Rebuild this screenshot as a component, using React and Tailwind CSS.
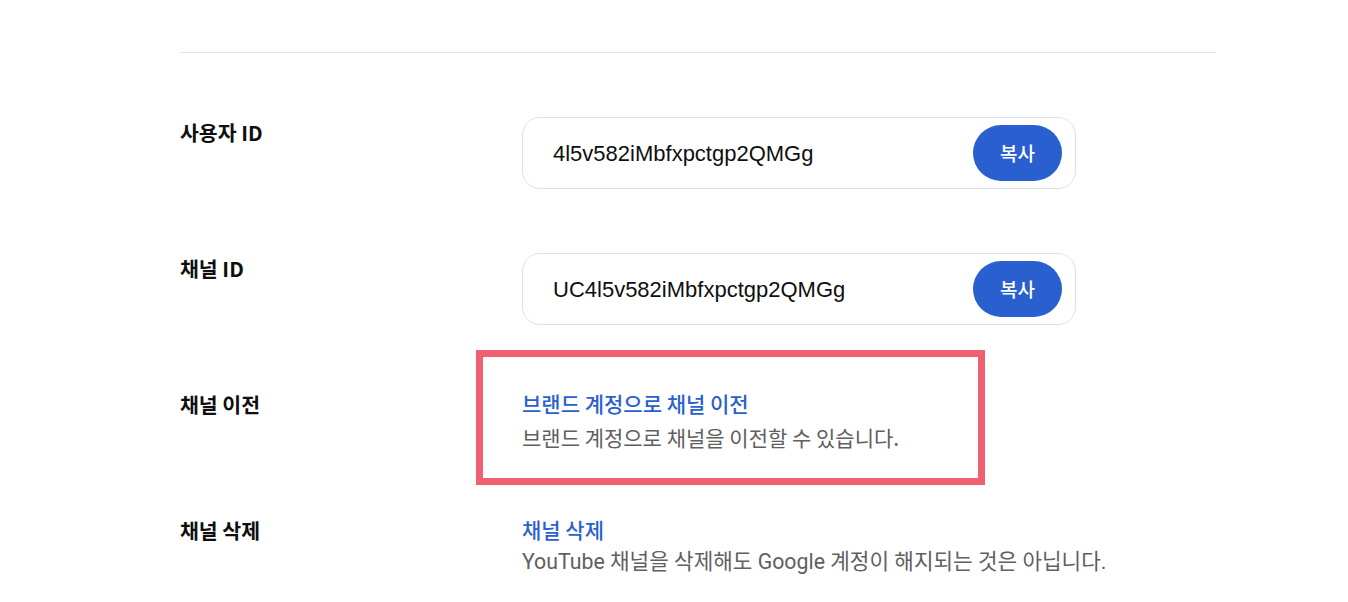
import React from 'react';

const kr = { fontFamily: '"Noto Sans CJK KR", "Noto Sans", sans-serif' };
const mono = { fontFamily: '"Liberation Sans", Arial, sans-serif' };
const mixed = { fontFamily: 'Roboto, "Noto Sans CJK KR", sans-serif' };

function Label({ children }) {
  return (
    <div className="w-[342px] shrink-0 pt-[1px] text-[20.5px] leading-[28px] font-bold text-[#0f0f0f]" style={kr}>
      {children}
    </div>
  );
}

function CopyField({ value }) {
  return (
    <div className="flex h-[72px] w-[554px] items-center justify-between rounded-[18px] border border-[#e0e0e0] bg-white pl-[30px] pr-[13px]">
      <span className="text-[22px] text-[#0f0f0f]" style={mono}>{value}</span>
      <button className="h-[56px] w-[89px] rounded-full bg-[#2a5fd0] text-[19px] font-medium text-white" style={kr}>
        복사
      </button>
    </div>
  );
}

function LinkBlock({ title, desc, descStyle }) {
  return (
    <div className="flex flex-col">
      <a className="text-[21px] leading-[28px] font-medium text-[#2a5fd0]" style={kr}>{title}</a>
      <p className="mt-[6px] text-[21px] leading-[28px] text-[#606060]" style={descStyle}>{desc}</p>
    </div>
  );
}

export default function App() {
  return (
    <div className="min-h-[602px] w-full bg-white">
      <div className="ml-[180px] w-[1036px] pt-[52px]">
        <div className="h-px w-full bg-[#e5e5e5]" />
        <div className="mt-[64px] flex flex-col gap-16">
          <div className="flex">
            <Label>사용자 ID</Label>
            <CopyField value="4l5v582iMbfxpctgp2QMGg" />
          </div>
          <div className="flex">
            <Label>채널 ID</Label>
            <CopyField value="UC4l5v582iMbfxpctgp2QMGg" />
          </div>
          <div className="flex">
            <Label>채널 이전</Label>
            <div className="relative">
              <LinkBlock
                title="브랜드 계정으로 채널 이전"
                desc="브랜드 계정으로 채널을 이전할 수 있습니다."
                descStyle={kr}
              />
              <div className="pointer-events-none absolute left-[-46px] top-[-39px] h-[135px] w-[509px] border-[7px] border-[#ef6170]" />
            </div>
          </div>
          <div className="flex">
            <Label>채널 삭제</Label>
            <div className="flex flex-col">
              <a className="text-[21px] leading-[28px] font-medium text-[#2a5fd0]" style={kr}>채널 삭제</a>
              <p className="mt-[5px] text-[21.3px] leading-[28px] text-[#606060]" style={mixed}>
                YouTube 채널을 삭제해도 Google 계정이 해지되는 것은 아닙니다.
              </p>
            </div>
          </div>
        </div>
      </div>
    </div>
  );
}
